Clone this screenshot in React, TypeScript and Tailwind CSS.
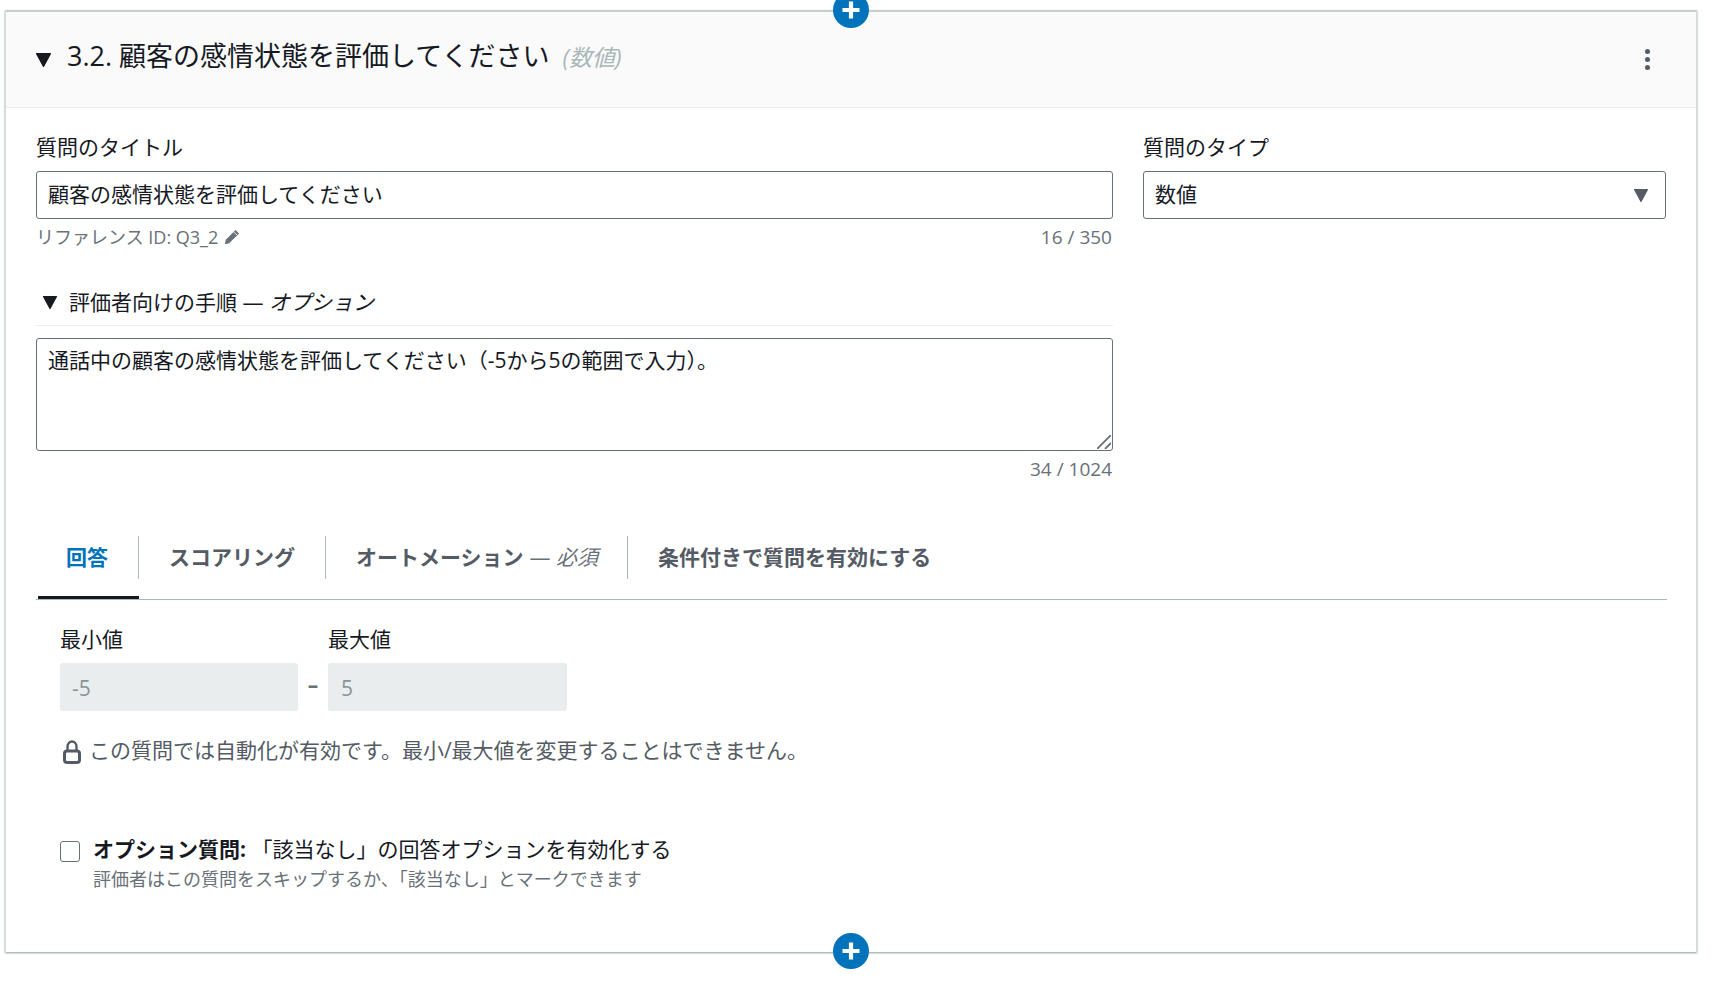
import React from "react";

function Plus({ className }: { className: string }) {
  return (
    <div className={`absolute left-1/2 -ml-[18px] flex h-[36px] w-[36px] items-center justify-center rounded-full bg-[#0073bb] ${className}`}>
      <svg width="20" height="20" viewBox="0 0 20 20">
        <path d="M10 1.5v17M1.5 10h17" stroke="#fff" strokeWidth="4.2" fill="none" />
      </svg>
    </div>
  );
}

function Triangle({ size, color = "#16191f" }: { size: number; color?: string }) {
  return (
    <svg width={size} height={size} viewBox="0 0 16 16" className="shrink-0">
      <path d="M1.5 2.5h13L8 14.5z" fill={color} stroke={color} strokeWidth="1.2" strokeLinejoin="round" />
    </svg>
  );
}

export default function App() {
  return (
    <div className="h-[982px] w-[1722px] overflow-hidden bg-white pl-[5px] pt-[10px] font-['Open_Sans','Noto_Sans_CJK_JP',sans-serif] text-[21px] leading-[28px] text-[#16191f]">
      <div className="relative h-[942px] w-[1692px] border-x border-t-2 border-[#d5dbdb] border-t-[#c8cdcd] shadow-[0_1px_2px_rgba(0,28,36,0.45)]">
        <Plus className="-top-[20px]" />
        <Plus className="-bottom-[17px]" />

        <header className="flex h-[96px] items-center border-b border-[#eaeded] bg-[#fafafa] pl-[29px] pr-[46px]">
          <Triangle size={17} />
          <div className="ml-[15px] flex -translate-y-[3px] items-baseline">
            <span className="text-[27px] leading-[36px]">3.2. 顧客の感情状態を評価してください</span>
            <span className="ml-[13px] text-[23px] italic leading-[36px] text-[#aab7b8]">(数値)</span>
          </div>
          <div className="ml-auto flex flex-col gap-[3px]">
            <span className="h-[5px] w-[5px] rounded-full bg-[#545b64]" />
            <span className="h-[5px] w-[5px] rounded-full bg-[#545b64]" />
            <span className="h-[5px] w-[5px] rounded-full bg-[#545b64]" />
          </div>
        </header>

        <div className="pl-[30px]">
          <div className="flex gap-[30px]">
            <div className="w-[1077px]">
              <div className="mt-[25px]">質問のタイトル</div>
              <input
                readOnly
                value="顧客の感情状態を評価してください"
                className="mt-[10px] block h-[48px] w-full rounded-[3px] border border-[#687078] bg-white px-[11px] pb-[4px] text-[21px] text-[#16191f] outline-none"
              />
              <div className="mt-[6px] flex h-[24px] items-center justify-between text-[18px] leading-[24px] text-[#687078]">
                <span className="flex items-center gap-[6px]">
                  リファレンス ID: Q3_2
                  <svg width="16" height="16" viewBox="0 0 16 16">
                    <path d="M11.6 1 15 4.4 5.2 14.2 0.8 15.2 1.8 10.8z" fill="#687078" />
                    <path d="M10 3.2 12.8 6" stroke="#fff" strokeWidth="1" />
                  </svg>
                </span>
                <span className="mr-[1px] text-[19px]">16 / 350</span>
              </div>
              <div className="mt-[39px] flex h-[38px] items-start border-b border-[#eaeded] pl-[6px]">
                <span className="mt-[6px]"><Triangle size={16} /></span>
                <span className="ml-[11px]">
                  評価者向けの手順 — <i className="italic">オプション</i>
                </span>
              </div>
              <div className="relative mt-[12px]">
                <textarea
                  readOnly
                  defaultValue="通話中の顧客の感情状態を評価してください（-5から5の範囲で入力）。"
                  className="block h-[113px] w-full resize-none rounded-[3px] border border-[#687078] bg-white px-[11px] py-[7px] text-[21px] leading-[28px] text-[#16191f] outline-none"
                />
                <svg width="14" height="14" viewBox="0 0 14 14" className="absolute bottom-[2px] right-[2px]">
                  <path d="M0 14 14 0M8 14 14 8" stroke="#687078" strokeWidth="1.8" fill="none" />
                </svg>
              </div>
              <div className="mr-[1px] mt-[6px] h-[24px] text-right text-[19px] leading-[24px] text-[#687078]">34 / 1024</div>
            </div>
            <div className="w-[523px]">
              <div className="mt-[25px]">質問のタイプ</div>
              <div className="mt-[10px] flex h-[48px] items-center justify-between rounded-[3px] border border-[#687078] bg-white pl-[11px] pr-[16px]">
                <span className="pb-[2px]">数値</span>
                <Triangle size={16} color="#545b64" />
              </div>
            </div>
          </div>

          <div className="mt-[55px] flex h-[64px] w-[1631px] items-start border-b border-[#aab7b8] pl-[2px]">
            <div className="h-[63px] w-[101px] border-b-[3px] border-[#16191f]">
              <div className="flex h-[43px] items-center border-r border-[#aab7b8] pb-[2px] pl-[28px] font-bold text-[#0073bb]">回答</div>
            </div>
            <div className="flex h-[43px] w-[187px] items-center border-r border-[#aab7b8] pb-[2px] pl-[30px] font-bold text-[#545b64]">スコアリング</div>
            <div className="flex h-[43px] w-[302px] items-center border-r border-[#aab7b8] pb-[2px] pl-[30px] font-bold text-[#545b64]">
              オートメーション
              <span className="ml-[6px] font-normal text-[#687078]">— <i className="italic">必須</i></span>
            </div>
            <div className="flex h-[43px] items-center pb-[2px] pl-[30px] font-bold text-[#545b64]">条件付きで質問を有効にする</div>
          </div>

          <div className="pl-[24px]">
            <div className="mt-[25px] flex">
              <div className="w-[268px]">最小値</div>
              <div>最大値</div>
            </div>
            <div className="mt-[10px] flex items-center">
              <div className="flex h-[48px] w-[238px] items-center rounded-[3px] bg-[#eaeded] pl-[12px] pt-[1px] text-[#879596]">-5</div>
              <div className="flex w-[30px] justify-center pb-[4px] font-bold text-[#687078]">–</div>
              <div className="flex h-[48px] w-[239px] items-center rounded-[3px] bg-[#eaeded] pl-[13px] pt-[1px] text-[#879596]">5</div>
            </div>
            <div className="mt-[29px] flex h-[24px] items-center text-[#545b64]">
              <svg width="18" height="24" viewBox="0 0 18 24" className="ml-[3px] shrink-0">
                <path d="M4.5 11V6.5a4.5 5 0 0 1 9 0V11" stroke="#545b64" strokeWidth="2.4" fill="none" />
                <rect x="1.5" y="11" width="15" height="11.5" rx="2.5" stroke="#545b64" strokeWidth="3" fill="none" />
              </svg>
              <span className="ml-[8px] pb-[4px]">この質問では自動化が有効です。最小/最大値を変更することはできません。</span>
            </div>
            <div className="mt-[71px] flex">
              <span className="mt-[6px] h-[21px] w-[20px] shrink-0 rounded-[3px] border border-[#687078] bg-white" />
              <div className="ml-[13px]">
                <div>
                  <b className="font-bold">オプション質問:</b> 「該当なし」の回答オプションを有効化する
                </div>
                <div className="mt-[4px] text-[18px] leading-[24px] text-[#687078]">評価者はこの質問をスキップするか、「該当なし」とマークできます</div>
              </div>
            </div>
          </div>
        </div>
      </div>
    </div>
  );
}
